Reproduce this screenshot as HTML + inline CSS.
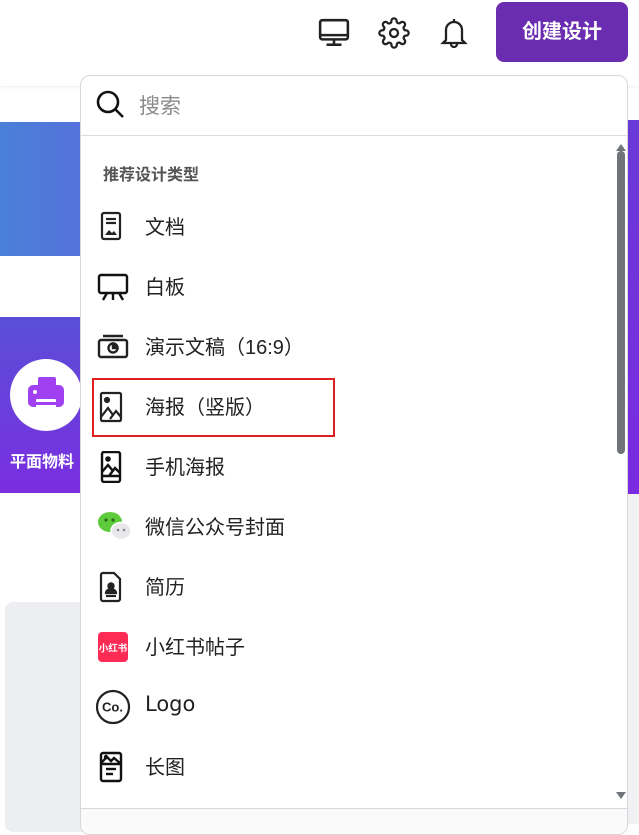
<!DOCTYPE html>
<html><head><meta charset="utf-8"><style>
*{margin:0;padding:0;box-sizing:border-box}
body{width:639px;height:823px;overflow:hidden;background:#fff;position:relative;font-family:"Liberation Sans","Noto Sans CJK SC",sans-serif}
.hdr{position:absolute;left:0;top:0;width:639px;height:86px;background:#fff;box-shadow:0 1px 3px rgba(0,0,0,.08)}
.btn{position:absolute;left:496px;top:2px;width:132px;height:60px;background:#6a2cb0;border-radius:8px;color:#fff;font-weight:bold;font-size:20px;text-align:center;line-height:60px}
.blue{position:absolute;left:0;top:122px;width:90px;height:134px;background:linear-gradient(90deg,#4a80d8,#5570dc)}
.purp{position:absolute;left:0;top:317px;width:90px;height:176px;background:linear-gradient(180deg,#5a4fd8,#7a2ee0)}
.circ{position:absolute;left:10px;top:359px;width:72px;height:72px;border-radius:50%;background:#fff}
.pl{position:absolute;left:10px;top:448px;color:#fff;font-weight:bold;font-size:16px}
.rp{position:absolute;left:628px;top:120px;width:11px;height:374px;background:linear-gradient(180deg,#6a3ad8,#7a2ae0)}
.grey{position:absolute;left:5px;top:602px;width:90px;height:230px;background:#eceef2;border-radius:8px}
.rg{position:absolute;left:628px;top:494px;width:11px;height:330px;background:#f1f1f4}
.dd{position:absolute;left:80px;top:75px;width:548px;height:760px;background:#fff;border:1px solid #d8d8dc;border-radius:10px;overflow:hidden}
.search{height:60px;border-bottom:1px solid #dcdcdf;position:relative}
.search span{position:absolute;left:58px;top:14px;font-size:21px;color:#8a8a8a}
.sec{position:absolute;left:22px;top:85px;font-size:16px;font-weight:bold;color:#555}
.it{position:absolute;left:0;width:530px;height:60px}
.it svg{position:absolute;left:16px;top:16px}
.it span{position:absolute;left:64px;top:14px;font-size:20px;color:#222}
.sel{position:absolute;left:11px;top:302px;width:243px;height:59px;border:2px solid #e02020}
.sb{position:absolute;left:536px;top:75px;width:8px;height:303px;background:#707378;border-radius:4px}
.foot{position:absolute;left:0;top:732px;width:548px;height:30px;border-top:1px solid #d8d8dc;background:#fafafa}
</style></head><body>
<div class="blue"></div><div class="purp"></div>
<div class="circ"><svg width="72" height="72" viewBox="0 0 72 72"><rect x="28" y="18" width="18" height="10" rx="2" fill="#a040f0"/><rect x="18" y="26" width="36" height="22" rx="5" fill="#a040f0"/><rect x="26" y="40" width="20" height="12" rx="1" fill="#fff"/><rect x="26" y="43" width="20" height="3" fill="#a040f0"/><circle cx="25" cy="33" r="2" fill="#fff"/></svg></div>
<div class="pl">平面物料</div>
<div class="rp"></div><div class="rg"></div><div class="grey"></div>
<div class="hdr">
<svg style="position:absolute;left:318px;top:18px" width="32" height="30" viewBox="0 0 30 28" fill="none" stroke="#222" stroke-width="2.4"><rect x="2" y="2" width="26" height="18" rx="2"/><line x1="2" y1="16" x2="28" y2="16"/><line x1="15" y1="20" x2="15" y2="25"/><line x1="8" y1="25" x2="22" y2="25"/></svg>
<svg style="position:absolute;left:378px;top:17px" width="32" height="32" viewBox="0 0 24 24" fill="none" stroke="#222" stroke-width="1.7"><circle cx="12" cy="12" r="3"/><path d="M19.4 15a1.65 1.65 0 0 0 .33 1.820l.06.06a2 2 0 1 1-2.830 2.830l-.06-.06a1.65 1.65 0 0 0-1.820-.33 1.65 1.65 0 0 0-1 1.510V21a2 2 0 1 1-4 0v-.09A1.65 1.65 0 0 0 9 19.4a1.65 1.65 0 0 0-1.820.33l-.06.06a2 2 0 1 1-2.830-2.830l.06-.06A1.65 1.65 0 0 0 4.68 15a1.65 1.65 0 0 0-1.510-1H3a2 2 0 1 1 0-4h.09A1.65 1.65 0 0 0 4.6 9a1.65 1.65 0 0 0-.33-1.820l-.06-.06a2 2 0 1 1 2.830-2.830l.06.06A1.65 1.65 0 0 0 9 4.68a1.65 1.65 0 0 0 1-1.510V3a2 2 0 1 1 4 0v.09a1.65 1.65 0 0 0 1 1.510 1.65 1.65 0 0 0 1.820-.33l.06-.06a2 2 0 1 1 2.830 2.830l-.06.06A1.65 1.65 0 0 0 19.4 9a1.65 1.65 0 0 0 1.510 1H21a2 2 0 1 1 0 4h-.09a1.65 1.65 0 0 0-1.510 1z"/></svg>
<svg style="position:absolute;left:439px;top:16px" width="30" height="32" viewBox="0 0 30 32" fill="none" stroke="#222" stroke-width="2.3"><path d="M15 3v2M7 24V14a8 8 0 0 1 16 0v10l3 3H4z"/><path d="M12 28a3 3 0 0 0 6 0"/></svg>
<div class="btn">创建设计</div>
</div>
<div class="dd">
<div class="search"><svg style="position:absolute;left:14px;top:13px" width="32" height="32" viewBox="0 0 32 32" fill="none" stroke="#111" stroke-width="2.6"><circle cx="13" cy="13" r="10"/><line x1="20.5" y1="20.5" x2="28" y2="28"/></svg><span>搜索</span></div>
<div class="sec">推荐设计类型</div>
<div class="it" style="top:121px"><svg width="28" height="30" viewBox="0 0 28 30" fill="none" stroke="#222" stroke-width="2.2" style="top:14px"><rect x="5" y="2" width="18" height="26" rx="2"/><line x1="9" y1="8" x2="19" y2="8"/><line x1="9" y1="12" x2="19" y2="12"/><path d="M8 24l4-5 3 3 2-2 3 4z" fill="#222" stroke="none"/></svg><span>文档</span></div>
<div class="it" style="top:181px"><svg width="32" height="32" viewBox="0 0 32 32" fill="none" stroke="#111" stroke-width="2.4" style="top:14px"><rect x="2" y="4" width="28" height="18" rx="2"/><path d="M10 22l-4 7M16 22v7M22 22l4 7"/></svg><span>白板</span></div>
<div class="it" style="top:241px"><svg width="32" height="30" viewBox="0 0 32 30" fill="none" stroke="#222" stroke-width="2.4" style="top:14px"><line x1="6" y1="5" x2="26" y2="5"/><rect x="2" y="9" width="28" height="17" rx="2"/><circle cx="16" cy="17" r="4.5"/><path d="M16 17V12.5A4.5 4.5 0 0 1 20.5 17z" fill="#222"/></svg><span>演示文稿（16:9）</span></div>
<div class="it" style="top:301px"><svg width="28" height="32" viewBox="0 0 28 32" fill="none" stroke="#222" stroke-width="2.2" style="top:14px"><rect x="4" y="2" width="20" height="28" rx="1.5"/><circle cx="10" cy="9" r="2" fill="#222"/><path d="M4 26l7-9 5 7M13 28l6-8 5 6"/></svg><span>海报（竖版）</span></div>
<div class="it" style="top:361px"><svg width="28" height="32" viewBox="0 0 28 32" fill="none" stroke="#111" stroke-width="2.4" style="top:14px"><rect x="5" y="1" width="18" height="30" rx="2"/><line x1="5" y1="25" x2="23" y2="25"/><circle cx="11" cy="8" r="1.6" fill="#111"/><path d="M5 21l6-7 5 6M12 25l6-8 5 5"/></svg><span>手机海报</span></div>
<div class="it" style="top:421px"><svg width="34" height="30" viewBox="0 0 34 30" style="top:14px"><ellipse cx="13" cy="11" rx="12" ry="10" fill="#5ecb3a"/><circle cx="9" cy="9" r="1.6" fill="#2a6a1a"/><circle cx="16" cy="9" r="1.6" fill="#2a6a1a"/><ellipse cx="24" cy="20" rx="10" ry="8.5" fill="#e8e8ea" stroke="#fff" stroke-width="1.5"/><circle cx="21" cy="19" r="1.3" fill="#888"/><circle cx="27" cy="19" r="1.3" fill="#888"/></svg><span>微信公众号封面</span></div>
<div class="it" style="top:481px"><svg width="28" height="32" viewBox="0 0 28 32" fill="none" stroke="#222" stroke-width="2.2" style="top:14px"><path d="M6 2h11l6 6v20a2 2 0 0 1-2 2H6a2 2 0 0 1-2-2V4a2 2 0 0 1 2-2z"/><circle cx="14" cy="15" r="2.6" fill="#222"/><path d="M9 22a5 4 0 0 1 10 0z" fill="#222"/><line x1="9" y1="25" x2="19" y2="25"/></svg><span>简历</span></div>
<div class="it" style="top:541px"><svg width="32" height="32" viewBox="0 0 32 32" style="top:14px"><rect x="1" y="1" width="30" height="30" rx="4" fill="#fe2c55"/><text x="16" y="20.5" font-size="9.5" fill="#fff" text-anchor="middle" font-weight="bold" font-family="Noto Sans CJK SC,sans-serif">小红书</text></svg><span>小红书帖子</span></div>
<div class="it" style="top:601px"><svg width="36" height="36" viewBox="0 0 36 36" style="left:14px;top:12px"><circle cx="18" cy="18" r="16" fill="none" stroke="#222" stroke-width="2.2"/><text x="17.5" y="22.5" font-size="13" font-weight="bold" fill="#222" text-anchor="middle" font-family="Liberation Sans,sans-serif">Co.</text></svg><span style="font-family:'DejaVu Sans',sans-serif;font-size:21px;top:15px">Logo</span></div>
<div class="it" style="top:661px"><svg width="28" height="32" viewBox="0 0 28 32" fill="none" stroke="#111" stroke-width="2.4" style="top:14px"><rect x="4" y="2" width="20" height="28" rx="2"/><path d="M4 13h20M4 12l6-6 4 4 3-3 7 6"/><circle cx="9" cy="6" r="1" fill="#111"/><line x1="9" y1="18" x2="19" y2="18"/><line x1="9" y1="23" x2="16" y2="23"/></svg><span>长图</span></div>
<div class="sel"></div>
<svg style="position:absolute;left:535px;top:68px" width="10" height="7"><path d="M0 7L5 0L10 7z" fill="#707378"/></svg>
<div class="sb"></div>
<svg style="position:absolute;left:535px;top:716px" width="10" height="7"><path d="M0 0L5 7L10 0z" fill="#707378"/></svg>
<div class="foot"></div>
</div>
</body></html>
